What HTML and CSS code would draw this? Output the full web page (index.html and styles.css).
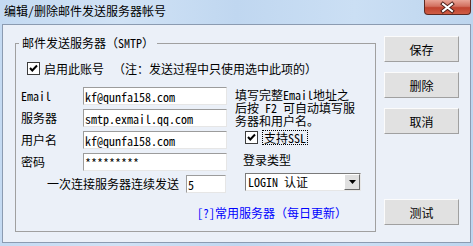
FILE: index.html
```html
<!DOCTYPE html>
<html lang="zh-CN">
<head>
<meta charset="utf-8">
<title>编辑/删除邮件发送服务器帐号</title>
<link rel="stylesheet" href="styles.css">
</head>
<body>
<div class="window">
  <div class="titlebar">
    <span class="title">编辑/删除邮件发送服务器帐号</span>
    <span class="close">
      <svg width="45" height="13" viewBox="0 0 45 13">
        <path d="M18 3 L27 10 M27 3 L18 10" stroke="#4a1e18" stroke-width="4" stroke-linecap="square" fill="none"/>
        <path d="M18 3 L27 10 M27 3 L18 10" stroke="#ffffff" stroke-width="2" stroke-linecap="square" fill="none"/>
      </svg>
    </span>
  </div>
  <div class="client">
    <fieldset class="group">
      <legend class="legend">邮件发送服务器（SMTP）</legend>
      <div class="enable-row">
        <span class="check"><svg width="11" height="11" viewBox="0 0 11 11"><polyline points="2,5 4.3,7.5 9,2.5" fill="none" stroke="#000" stroke-width="2"/></svg></span>
        <span class="enable-label">启用此账号</span>
        <span class="note">（注：发送过程中只使用选中此项的）</span>
      </div>
      <div class="form">
        <span class="lbl row1">Email</span>
        <input class="field row1" type="text" value="kf@qunfa158.com" readonly>
        <span class="lbl row2">服务器</span>
        <input class="field row2" type="text" value="smtp.exmail.qq.com" readonly>
        <span class="lbl row3">用户名</span>
        <input class="field row3" type="text" value="kf@qunfa158.com" readonly>
        <span class="lbl row4">密码</span>
        <input class="field row4" type="text" value="*********" readonly>
        <div class="count-row">
          <span class="count-label">一次连接服务器连续发送</span>
          <input class="count" type="text" value="5" readonly>
        </div>
        <div class="hint">填写完整Email地址之<br>后按 F2 可自动填写服<br>务器和用户名。</div>
        <div class="ssl-row">
          <span class="check"><svg width="11" height="11" viewBox="0 0 11 11"><polyline points="2,5 4.3,7.5 9,2.5" fill="none" stroke="#000" stroke-width="2"/></svg></span>
          <span class="ssl-label">支持SSL</span>
        </div>
        <span class="login-label">登录类型</span>
        <div class="select">
          <span class="select-text">LOGIN 认证</span>
          <span class="select-btn"><svg width="7" height="4" viewBox="0 0 7 4"><polygon points="0,0 7,0 3.5,4" fill="#000"/></svg></span>
        </div>
      </div>
      <div class="link-row"><span class="link">[?]常用服务器（每日更新）</span></div>
    </fieldset>
    <div class="buttons">
      <button class="btn">保存</button>
      <button class="btn">删除</button>
      <button class="btn">取消</button>
      <button class="btn btn-test">测试</button>
    </div>
  </div>
</div>
</body>
</html>
```
FILE: styles.css
```css
* { box-sizing: border-box; }
html, body { margin: 0; padding: 0; }
body {
  width: 473px;
  height: 246px;
  overflow: hidden;
  font-family: "Noto Sans Mono CJK SC", "Noto Sans CJK SC", "Liberation Mono", monospace;
  font-size: 12px;
  color: #000;
  background: #c3d9f1;
}
.window {
  height: 246px;
  display: flex;
  flex-direction: column;
  background: linear-gradient(90deg, #c4daf2 0%, #d0e2f5 25%, #c0d7f0 50%, #cbdff4 75%, #bdd5ee 100%);
}
.titlebar {
  height: 24px;
  display: flex;
  align-items: flex-start;
  flex: none;
}
.title {
  padding: 4px 0 0 4px;
  line-height: 14px;
  white-space: nowrap;
}
.close {
  margin-left: auto;
  margin-right: 2px;
  width: 47px;
  height: 15px;
  border: 1px solid #5e2a22;
  border-top: none;
  border-radius: 0 0 4px 4px;
  background: linear-gradient(#e9a597 0%, #d2705f 45%, #c0432f 55%, #cf5d45 100%);
  display: flex;
  align-items: center;
  justify-content: center;
}
.client {
  margin: 0 2px;
  height: 219px;
  flex: none;
  border: 1px solid #8b9bb1;
  background: #ebf0f8;
  display: flex;
  align-items: flex-start;
  gap: 8px;
  padding: 11px 0 0 12px;
}
.group {
  margin: 0;
  padding: 0;
  min-width: 0;
  width: 361px;
  height: 196px;
  border: 1px solid #a0a0a0;
}
.legend {
  margin-left: 3px;
  padding: 0 3px;
  line-height: 14px;
}
.enable-row {
  display: flex;
  align-items: center;
  height: 13px;
  margin-top: 12px;
  padding-left: 11px;
  white-space: nowrap;
}
.check {
  width: 13px;
  height: 13px;
  flex: none;
  border: 1px solid #3c3c3c;
  background: #fff;
  display: flex;
}
.enable-label { margin-left: 4px; line-height: 14px; }
.note { margin-left: 9px; line-height: 14px; }
.form {
  display: grid;
  grid-template-columns: 62px 144px 1fr;
  grid-template-rows: repeat(5, 18px);
  row-gap: 4px;
  margin-top: 12px;
  padding-left: 5px;
}
.row1 { grid-row: 1; }
.row2 { grid-row: 2; }
.row3 { grid-row: 3; }
.row4 { grid-row: 4; }
.lbl {
  grid-column: 1;
  align-self: center;
  line-height: 14px;
}
.field, .count {
  grid-column: 2;
  height: 18px;
  margin: 0;
  padding: 0 0 0 1px;
  border: 1px solid;
  border-color: #9c9c9c #e6e6e6 #e6e6e6 #9c9c9c;
  background: #fff;
  font: inherit;
  color: #000;
  outline: none;
}
.field { width: 144px; }
.count-row {
  grid-column: 1 / span 2;
  grid-row: 5;
  display: flex;
  justify-content: flex-end;
  align-items: center;
  gap: 7px;
}
.count-label { line-height: 14px; white-space: nowrap; }
.count { width: 40px; margin-right: 1px; }
.hint {
  grid-column: 3;
  grid-row: 1 / span 2;
  margin: 1px 0 0 8px;
  line-height: 13px;
  white-space: nowrap;
}
.ssl-row {
  grid-column: 3;
  grid-row: 3;
  display: flex;
  align-items: center;
  align-self: start;
  margin: -1px 0 0 18px;
  white-space: nowrap;
}
.ssl-label {
  margin-left: 4px;
  border: 1px dotted #000;
  padding: 0 1px;
  line-height: 13px;
}
.login-label {
  grid-column: 3;
  grid-row: 4;
  margin: 0 0 0 16px;
  line-height: 14px;
  align-self: start;
}
.select {
  grid-column: 3;
  grid-row: 5;
  margin: -2px 0 0 18px;
  width: 116px;
  height: 18px;
  border: 1px solid;
  border-color: #7a7a7a #e6e6e6 #e6e6e6 #7a7a7a;
  background: #fff;
  display: flex;
  align-items: center;
}
.select-text {
  flex: 1;
  padding-left: 2px;
  line-height: 14px;
  white-space: nowrap;
}
.select-btn {
  width: 16px;
  height: 16px;
  border: 1px solid;
  border-color: #fff #6a6a6a #6a6a6a #fff;
  background: #e0e0e0;
  display: flex;
  align-items: center;
  justify-content: center;
}
.link-row {
  margin-top: 13px;
  padding-left: 181px;
  line-height: 14px;
}
.link { color: #0000ff; white-space: nowrap; }
.buttons {
  display: flex;
  flex-direction: column;
  gap: 10px;
  height: 196px;
}
.btn {
  width: 75px;
  height: 26px;
  margin: 0;
  padding: 0;
  border: 1px solid;
  border-color: #fbfbfb #a0a0a0 #a0a0a0 #fbfbfb;
  background: #e1e1e1;
  font: inherit;
  color: #000;
}
.btn-test { margin-top: auto; margin-bottom: 7px; }
```
